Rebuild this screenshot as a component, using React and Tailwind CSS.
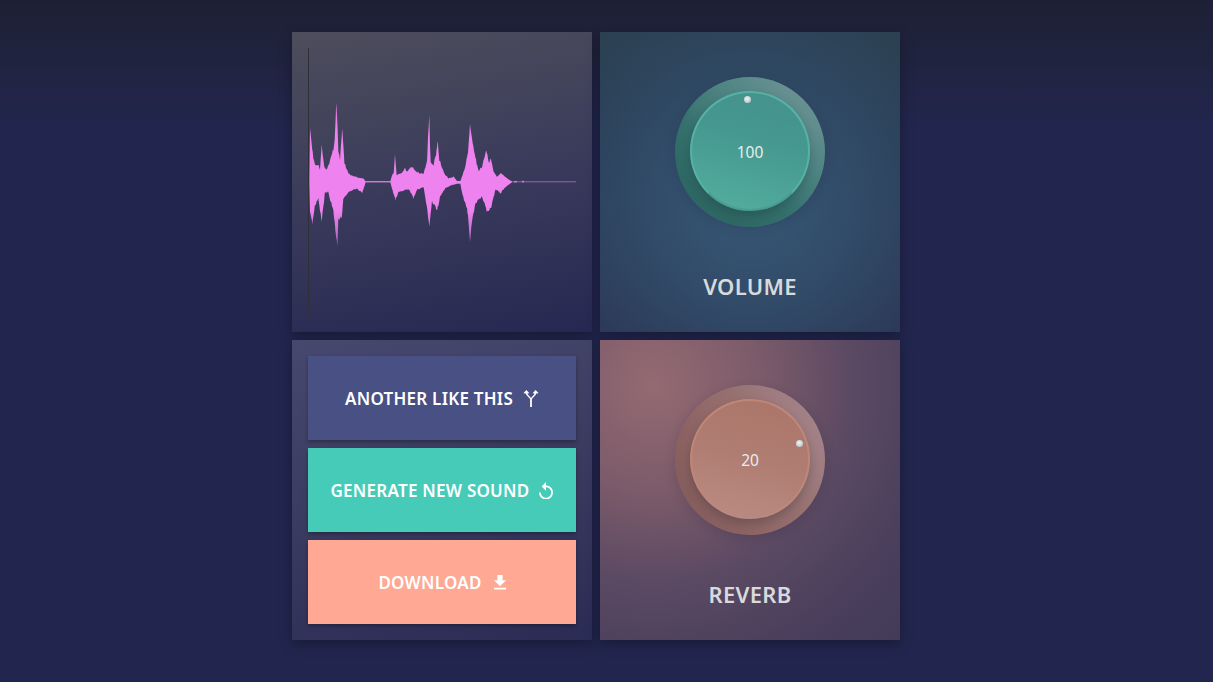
// Sound generator panel: waveform, two knobs, three action buttons
const TOP = [[52,450],[54,289],[60,345],[64,379],[69,399],[79,399],[84,412],[89,344],[96,404],[104,414],[110,400],[116,379],[124,354],[128,330],[133,210],[136,270],[139,359],[144,384],[151,290],[157,394],[169,424],[178,432],[189,434],[200,438],[214,440],[221,448],[295,448],[300,430],[305,425],[309,372],[314,430],[330,425],[338,410],[345,420],[360,405],[370,420],[385,425],[395,425],[405,390],[408,320],[412,252],[414,340],[416,395],[425,400],[432,370],[437,330],[442,385],[450,410],[460,430],[470,440],[485,435],[495,447],[505,447],[512,430],[520,405],[528,360],[534,280],[540,320],[548,370],[560,420],[570,405],[583,355],[590,395],[597,385],[605,420],[615,435],[625,425],[640,435],[650,443],[660,448]]
const BOTTOM = [[52,450],[52,529],[61,574],[69,519],[79,499],[89,564],[99,479],[109,479],[124,534],[130,590],[136,638],[139,559],[149,554],[154,499],[169,479],[194,469],[211,481],[221,451],[295,451],[302,475],[310,500],[320,478],[340,472],[352,472],[364,497],[375,472],[395,465],[405,525],[412,580],[420,505],[435,532],[445,490],[460,468],[475,460],[495,455],[505,455],[512,490],[525,525],[530,570],[534,632],[540,565],[550,512],[570,492],[585,535],[597,525],[610,472],[625,482],[640,465],[660,451]]

function envelope(points, x) {
  for (let i = 1; i < points.length; i++) {
    if (x <= points[i][0]) {
      const [x0, y0] = points[i - 1]
      const [x1, y1] = points[i]
      return y0 + ((y1 - y0) * (x - x0)) / (x1 - x0 || 1)
    }
  }
  return 450
}

// fixed noise, so the edge looks like sample data and stays the same on every load
function jitter(x, y) {
  const depth = Math.abs(y - 450)
  if (depth < 6) return 0
  const hash = Math.sin(x * 12.9898) * 43758.5453
  const noise = hash - Math.floor(hash)
  return (y < 450 ? -1 : 1) * (noise - 0.25) * Math.min(9, depth * 0.16)
}

function wavePath() {
  const top = []
  const bottom = []
  // walk every envelope corner too, so the spike tips are kept
  const xs = [...new Set([...TOP.map((p) => p[0]), ...BOTTOM.map((p) => p[0])])]
  for (let x = 52; x <= 660; x += 2) xs.push(x)
  xs.sort((a, b) => a - b)
  for (const x of xs) {
    const t = envelope(TOP, x)
    const b = envelope(BOTTOM, x)
    top.push(`${(x / 3 - 16).toFixed(2)},${((t + jitter(x, t)) / 3 - 16).toFixed(2)}`)
    bottom.unshift(`${(x / 3 - 16).toFixed(2)},${((b + jitter(x + 5, b)) / 3 - 16).toFixed(2)}`)
  }
  return `M${top.join('L')}L${bottom.join('L')}Z`
}

function Waveform() {
  return (
    <svg viewBox="0 0 268 268" className="block h-[268px] w-[268px]">
      <defs>
        <linearGradient id="wave" gradientUnits="userSpaceOnUse" x1="0" y1="50" x2="0" y2="200">
          <stop offset="0" stopColor="#ee82ee" stopOpacity="0.8" />
          <stop offset="0.2" stopColor="#ee82ee" />
          <stop offset="0.75" stopColor="#ee82ee" />
          <stop offset="1" stopColor="#ee82ee" stopOpacity="0.6" />
        </linearGradient>
      </defs>
      <rect x="0" y="0" width="1" height="268" fill="#2f3035" />
      <path d={wavePath()} fill="url(#wave)" />
      <rect x="58" y="133.3" width="26" height="1" fill="#ee82ee" opacity="0.55" />
      <rect x="204" y="133.3" width="64" height="1" fill="#ee82ee" opacity="0.55" />
      <rect x="206" y="133" width="3" height="1.4" fill="#ee82ee" opacity="0.8" />
      <rect x="214" y="132.8" width="2" height="1.6" fill="#ee82ee" opacity="0.8" />
    </svg>
  )
}

function Knob({ value, label, teal, dotClass, panelClass }) {
  return (
    <div className={`flex h-[300px] w-[300px] flex-col items-center pt-[45px] shadow-[0_4px_12px_rgba(0,0,0,0.3)] ${panelClass}`}>
      <div
        className={`flex h-[150px] w-[150px] items-center justify-center rounded-full shadow-[0_3px_12px_rgba(20,20,50,0.15)] ${
          teal
            ? 'bg-[linear-gradient(220deg,#7a989c_0%,#4f8583_35%,#35706d_60%,#2d6662_85%)]'
            : 'bg-[linear-gradient(240deg,#a88a93_0%,#96706f_42%,#8c6362_70%,#835c5c_90%)]'
        }`}
      >
        <div
          className={`relative -mt-[2px] flex h-[120px] w-[120px] items-center justify-center rounded-full border-2 shadow-[0_5px_8px_rgba(20,30,40,0.22)] ${
            teal
              ? 'border-[#55b3a5] border-b-[#4a9d92] bg-[linear-gradient(15deg,#54ae9f_0%,#45988f_60%,#44918b_100%)]'
              : 'border-[#c08678] border-b-[#b98a80] bg-[linear-gradient(195deg,#ab7569_0%,#b07d72_50%,#bb8c83_100%)]'
          }`}
        >
          <span className="absolute mt-[4px] text-[15.5px] text-[#e6eeed] [font-family:'Noto_Sans',sans-serif]">
            {value}
          </span>
          <span className={`absolute h-[7px] w-[7px] rounded-full bg-[radial-gradient(circle_at_45%_40%,#f2f4f4,#a9b8b8)] ${dotClass}`} />
        </div>
      </div>
      <div className="mt-[44px] text-[22px] leading-[30px] font-semibold tracking-[0.3px] text-[#d8dadc] [font-family:'Noto_Sans',sans-serif]">
        {label}
      </div>
    </div>
  )
}

function ActionButton({ label, colorClass, children }) {
  return (
    <button
      className={`flex h-[84px] w-[268px] items-center justify-center gap-[10px] pt-[1px] text-[17px] font-semibold tracking-[0.25px] text-white shadow-[0_2px_4px_rgba(0,0,0,0.3)] [font-family:'Noto_Sans',sans-serif] ${colorClass}`}
    >
      {label}
      {children}
    </button>
  )
}

export default function App() {
  return (
    <div className="h-[682px] overflow-hidden bg-[linear-gradient(180deg,#1d2035_0px,#20233f_60px,#22264e_130px,#22264e_100%)] pt-8 pl-[292px]">
      <div className="grid w-[608px] grid-cols-[300px_300px] gap-2">
        <div className="h-[300px] bg-[linear-gradient(170deg,#4d4d5c_0%,#3a3b5b_50%,#262852_100%)] p-4 shadow-[0_4px_12px_rgba(0,0,0,0.3)]">
          <Waveform />
        </div>

        <Knob
          value="100"
          label="VOLUME"
          teal
          dotClass="top-[3px] left-[52px]"
          panelClass="bg-[radial-gradient(circle_at_50%_58%,rgba(56,88,118,1)_0%,rgba(50,78,108,0.85)_45%,rgba(42,60,85,0)_100%),linear-gradient(180deg,#2b4050_0%,#2a3350_100%)]"
        />

        <div className="flex h-[300px] flex-col gap-2 bg-[linear-gradient(165deg,#47486e_0%,#3a3b60_50%,#2b2c55_100%)] p-4 shadow-[0_4px_12px_rgba(0,0,0,0.3)]">
          <ActionButton label="ANOTHER LIKE THIS" colorClass="bg-[#485084]">
            <svg viewBox="0 0 16 18" className="h-[18px] w-4" fill="white">
              <path d="M7.100 17V9L3 4.400l1-.8L8 8l4-4.400 1 .8L8.900 9v8z" />
              <path d="M3.400 0l3 3.200-1.600.2-.8 1.200h-.7l-.6-1.200-2.300-.2zM12.600 0l3 3.200-2.300.2-.6 1.200H12l-.8-1.200-1.600-.2z" />
            </svg>
          </ActionButton>
          <ActionButton label="GENERATE NEW SOUND" colorClass="bg-[#47cbb9]">
            <svg viewBox="4 1 16 20" className="h-[17.5px] w-[14px]" fill="white">
              <path d="M12 5V1L7 6l5 5V7c3.31 0 6 2.69 6 6s-2.69 6-6 6-6-2.69-6-6H4c0 4.42 3.58 8 8 8s8-3.58 8-8-3.58-8-8-8z" />
            </svg>
          </ActionButton>
          <ActionButton label="DOWNLOAD" colorClass="bg-[#ffa894]">
            <svg viewBox="5 3 14 17" className="ml-[2px] h-[14.6px] w-3" fill="white">
              <path d="M19 9h-4V3H9v6H5l7 7 7-7zM5 18v2h14v-2H5z" />
            </svg>
          </ActionButton>
        </div>

        <Knob
          value="20"
          label="REVERB"
          dotClass="top-[39px] right-[5px]"
          panelClass="bg-[radial-gradient(circle_at_18%_15%,#946a72_0%,#7c5b6a_30%,#5c4a63_55%,#4a3f5c_80%,#423b58_100%)]"
        />
      </div>
    </div>
  )
}
